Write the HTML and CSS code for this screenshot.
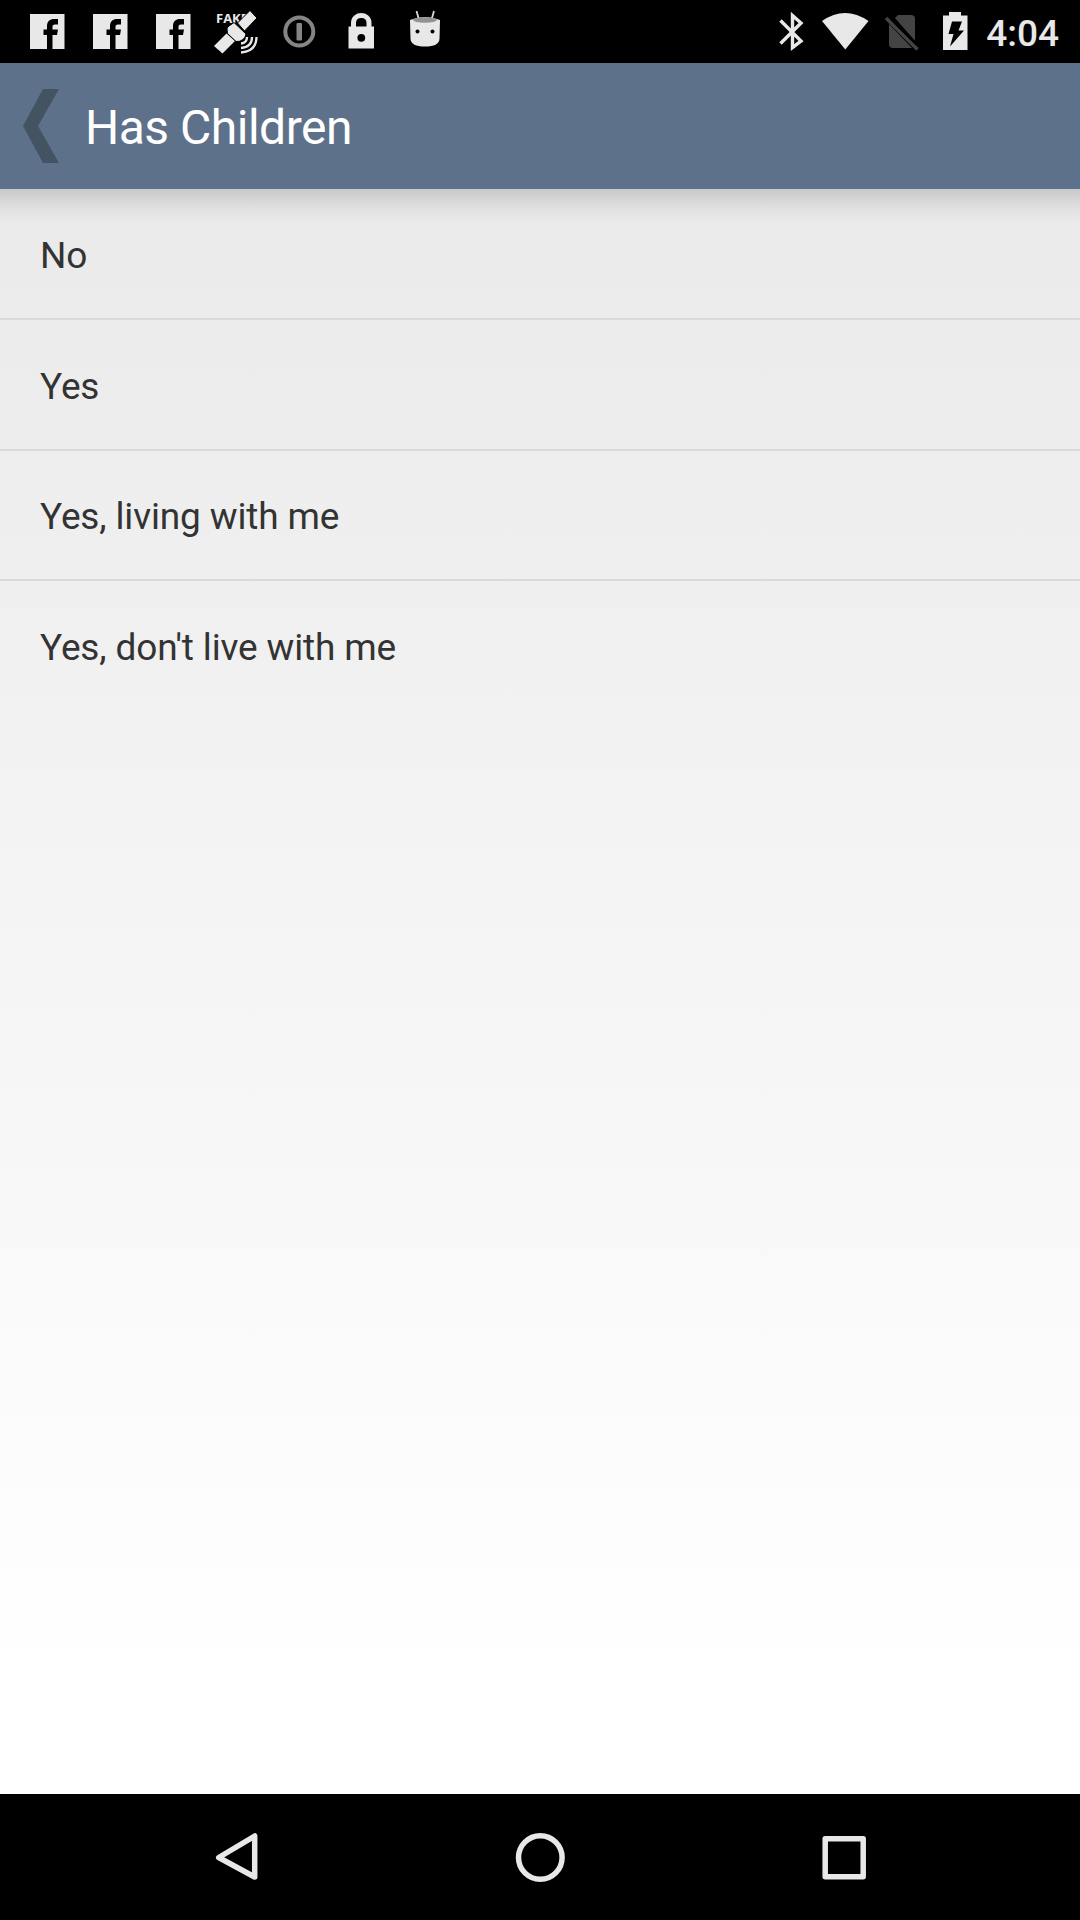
FILE: index.html
```html
<!DOCTYPE html>
<html lang="en">
<head>
<meta charset="utf-8">
<title>Has Children</title>
<link rel="stylesheet" href="styles.css">
</head>
<body>
<div class="screen">
  <header class="status">
    <svg class="notifications" viewBox="0 0 450 63" width="450" height="63" fill="#e8e8e8">
      <defs>
        <g id="fb"><rect x="0" y="14" width="34.5" height="35" /><path fill="#000" d="M17 49V35H13.500V29.500H17V26C17 21.500 20 19 24 19H28V24.500H25C23 24.500 22.500 25.500 22.500 27V29.500H28L27 35H22.500V49Z"/></g>
      </defs>
      <use href="#fb" x="30"/><use href="#fb" x="93"/><use href="#fb" x="156"/>
      <text class="fake" x="216" y="23">FAKE</text>
      <path d="M214 46L226.500 33.500L235 41L222.500 53.500Z"/>
      <path stroke="#000" stroke-width="1" d="M237.500 23L250 10.500L257 18L244.500 31Z"/>
      <path stroke="#000" stroke-width="1" d="M227 29Q227 27 229 26L234 22.500L246 34Q245.500 37.500 243 39.500Q240 42 236 41.500L227.500 33.500Z"/>
      <g fill="none" stroke="#e8e8e8" stroke-width="2.300">
        <path d="M241 43.500Q247 43 247 37M241 48Q252 47 252 37M241 52.500Q256.500 51 256.500 37"/>
      </g>
      <circle cx="299.300" cy="31.500" r="14" fill="none" stroke="#858585" stroke-width="4"/>
      <rect x="296.500" y="23" width="5.500" height="17.500" rx="1" fill="#858585"/>
      <path fill="none" stroke="#e8e8e8" stroke-width="5" d="M353.500 28V23C353.500 13 369 13 369 23V28"/>
      <rect x="348.500" y="26.500" width="25.500" height="22"/>
      <circle cx="361.300" cy="37.800" r="3.900" fill="#000"/>
      <path d="M410 20Q425 14 440 20L439.500 39Q439 46.500 425 46.500Q411 46.500 410.500 39Z"/>
      <ellipse cx="425" cy="20" rx="12" ry="2.800" fill="#929292"/>
      <path fill="none" stroke="#d8d8d8" stroke-width="1.800" d="M416.500 11L418.500 18M434 11L432 18"/>
      <circle cx="417.500" cy="31.500" r="2" fill="#000"/><circle cx="432.500" cy="31.500" r="2" fill="#000"/>
    </svg>
    <div class="system">
      <svg viewBox="775 0 200 63" width="200" height="63" fill="#e8e8e8">
        <path fill="none" stroke="#e8e8e8" stroke-width="3.400" d="M780.500 20.500L801 41L792.500 47.500V15.500L801 23L780.500 43.500"/>
        <path d="M822 21Q845 5 868.500 21L845.300 49.500Z"/>
        <path fill="#444" d="M895 18L898 15H911Q915 15 915 19V41Z"/>
        <path fill="#444" d="M889 24L912 48H893Q889 48 889 44Z"/>
        <path fill="none" stroke="#444" stroke-width="3.400" d="M886 18L917.500 49.500"/>
        <path fill="none" stroke="#000" stroke-width="3" d="M891 18.500L917 44.500"/>
        <path d="M949 12H961V15.500H967.500V50H943V15.500H949Z"/>
        <path fill="#000" d="M952 21.500H962L958.500 30.500H964L950 46.500L953.500 34H948.500Z"/>
      </svg>
      <span class="clock">4:04</span>
    </div>
  </header>
  <div class="appbar">
    <svg class="back" viewBox="0 0 36 74" width="36" height="74"><path fill="#445362" d="M20 0H36L15 37L36 74H20L0 37Z"/></svg>
    <h1 class="title">Has Children</h1>
  </div>
  <main class="content">
    <ul class="options">
      <li class="option">No</li>
      <li class="option">Yes</li>
      <li class="option">Yes, living with me</li>
      <li class="option">Yes, don't live with me</li>
    </ul>
  </main>
  <nav class="navbar">
    <svg viewBox="0 0 1080 126" width="1080" height="126" fill="none" stroke="#e8e8e8" stroke-width="5.500" stroke-linejoin="round">
      <path d="M254.700 42V83L218.700 63.500Z"/>
      <circle cx="540.300" cy="63.500" r="21.800"/>
      <rect x="825.200" y="44.700" width="38" height="38"/>
    </svg>
  </nav>
</div>
</body>
</html>
```
FILE: styles.css
```css
body {
  margin: 0;
  font-family: Roboto, sans-serif;
}
.screen {
  display: flex;
  flex-direction: column;
  width: 1080px;
  height: 1920px;
  overflow: hidden;
}
.status {
  display: flex;
  justify-content: space-between;
  height: 63px;
  background: #000;
}
.status svg {
  display: block;
}
.fake {
  font: bold 13px "Open Sans", sans-serif;
}
.system {
  display: flex;
  align-items: center;
  padding-right: 21px;
}
.clock {
  width: 84px;
  margin-top: 4px;
  text-align: right;
  white-space: nowrap;
  color: #e8e8e8;
  font-size: 37px;
  font-weight: 500;
  line-height: 44px;
}
.appbar {
  display: flex;
  align-items: center;
  gap: 26px;
  box-sizing: border-box;
  height: 126px;
  padding-left: 23px;
  background: #5e718b;
}
.title {
  margin: 4px 0 0;
  color: #fff;
  font-size: 48px;
  font-weight: 400;
  line-height: 56px;
  letter-spacing: -.5px;
}
.content {
  flex: 1;
  background:
    linear-gradient(rgba(0, 0, 0, .14), rgba(0, 0, 0, .04) 60%, transparent) 0 0 / 100% 34px no-repeat,
    linear-gradient(#eaeaea, #fff 93%);
}
.options {
  margin: 0;
  padding: 0;
  list-style: none;
}
.option {
  display: flex;
  align-items: center;
  height: 129px;
  padding: 4px 40px 0;
  box-sizing: border-box;
  color: #333;
  font-size: 37px;
  letter-spacing: -.15px;
}
.option + .option {
  height: 130.500px;
  border-top: 2px solid #d9d9d9;
}
.navbar {
  height: 126px;
  background: #000;
}
.navbar svg {
  display: block;
}
```
